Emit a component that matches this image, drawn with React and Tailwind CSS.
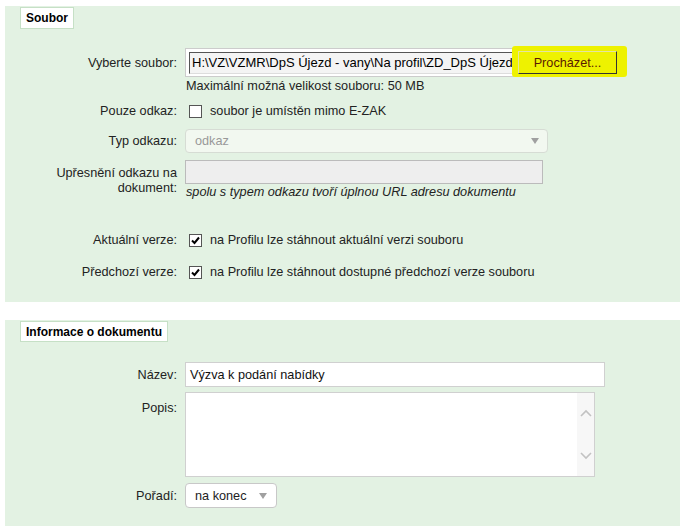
import React from "react";

const font = { fontFamily: '"Liberation Sans", Arial, sans-serif' };

const Check = ({ checked }) => (
  <span className="inline-flex h-[13px] w-[13px] shrink-0 items-center justify-center border border-[#555] bg-white">
    {checked && (
      <svg width="9" height="9" viewBox="0 0 9 9">
        <path d="M1 4.5 L3.5 7 L8 1.5" fill="none" stroke="#000" strokeWidth="2" />
      </svg>
    )}
  </span>
);

const Arrow = () => (
  <svg width="8" height="6" viewBox="0 0 8 6" className="shrink-0">
    <path d="M0 0 H8 L4 6 Z" fill="#a0a0a0" />
  </svg>
);

const Legend = ({ children }) => (
  <div className="ml-[15px] mt-[1px] inline-flex h-[22px] items-center border border-[#c6e0c6] bg-white px-[5px] text-[12px] font-bold text-black">
    {children}
  </div>
);

const Label = ({ children, className = "" }) => (
  <div className={`w-[180px] shrink-0 pr-[8px] text-right ${className}`}>{children}</div>
);

export default function App() {
  return (
    <div className="min-h-[526px] bg-white pt-[6px] text-[12.7px] leading-[16px] text-[#222]" style={font}>
      <div className="ml-[5px] flex h-[296px] flex-col bg-[#e3f2e3]">
        <div>
          <Legend>Soubor</Legend>
        </div>

        <div className="mt-[19px] flex items-center">
          <Label>Vyberte soubor:</Label>
          <div className="relative flex h-[29px] w-[435px] items-center border border-[#cccccc] bg-white pl-[3px]">
            <div className="flex h-[22px] w-[325px] items-center overflow-hidden whitespace-nowrap border border-t-[#555] border-l-[#555] border-b-[#ddd] border-r-[#ddd] bg-[#f4f4f4] pl-[2px] text-[13px] text-black">
              H:\VZ\VZMR\DpS Újezd - vany\Na profil\ZD_DpS Újezd
            </div>
            <div className="absolute left-[326px] top-[-3px] h-[31px] w-[115px] rounded-[3px] bg-[#eef200]" />
            <div className="relative ml-[4px] flex h-[23px] w-[99px] items-center justify-center border border-[#e4e4a0] border-b-[#333] border-r-[#333] bg-[#eef200] text-[#5a1a00]">
              Procházet...
            </div>
          </div>
        </div>

        <div className="mt-[1px] pl-[181px]">Maximální možná velikost souboru: 50 MB</div>

        <div className="mt-[9px] flex items-center">
          <Label>Pouze odkaz:</Label>
          <div className="ml-[4px] flex items-center gap-[8px]">
            <Check />
            <span>soubor je umístěn mimo E-ZAK</span>
          </div>
        </div>

        <div className="mt-[10px] flex items-center">
          <Label>Typ odkazu:</Label>
          <div className="flex h-[24px] w-[363px] items-center justify-between rounded-[4px] border border-[#d6dcd4] bg-[#f2f8f0] pl-[9px] pr-[8px] text-[#999]">
            <span>odkaz</span>
            <Arrow />
          </div>
        </div>

        <div className="mt-[7px] flex items-start">
          <Label className="pt-[6px] leading-[15px]">
            Upřesnění odkazu na
            <br />
            dokument:
          </Label>
          <div className="flex flex-col">
            <div className="h-[24px] w-[358px] border border-[#bbbbbb] bg-[#eeeeee]" />
            <div className="pl-[1px] italic">spolu s typem odkazu tvoří úplnou URL adresu dokumentu</div>
          </div>
        </div>

        <div className="mt-[32px] flex items-center">
          <Label>Aktuální verze:</Label>
          <div className="ml-[4px] flex items-center gap-[8px]">
            <Check checked />
            <span>na Profilu lze stáhnout aktuální verzi souboru</span>
          </div>
        </div>

        <div className="mt-[16px] flex items-center">
          <Label>Předchozí verze:</Label>
          <div className="ml-[4px] flex items-center gap-[8px]">
            <Check checked />
            <span>na Profilu lze stáhnout dostupné předchozí verze souboru</span>
          </div>
        </div>
      </div>

      <div className="ml-[5px] mt-[18px] flex min-h-[206px] flex-col bg-[#e3f2e3] pb-[18px]">
        <div>
          <div className="ml-[15px] mt-[1px] inline-flex h-[21px] items-center border border-[#c6e0c6] bg-white px-[5px] text-[12px] font-bold text-black">
            Informace o dokumentu
          </div>
        </div>

        <div className="mt-[20px] flex items-center">
          <Label>Název:</Label>
          <div className="flex h-[25px] w-[420px] items-center border border-[#d0d0d0] bg-white pl-[4px] text-[#111]">
            Výzva k podání nabídky
          </div>
        </div>

        <div className="mt-[5px] flex items-start">
          <Label className="pt-[8px]">Popis:</Label>
          <div className="flex h-[85px] w-[410px] justify-end border border-[#d0d0d0] bg-white">
            <div className="flex w-[17px] flex-col items-center justify-between bg-[#f7f7f7] py-[16px]">
              <svg width="12" height="8" viewBox="0 0 12 8">
                <path d="M1 7 L6 2 L11 7" fill="none" stroke="#c2c2c2" strokeWidth="1.6" />
              </svg>
              <svg width="12" height="8" viewBox="0 0 12 8">
                <path d="M1 1 L6 6 L11 1" fill="none" stroke="#c2c2c2" strokeWidth="1.6" />
              </svg>
            </div>
          </div>
        </div>

        <div className="mt-[6px] flex items-center">
          <Label>Pořadí:</Label>
          <div className="flex h-[25px] w-[92px] items-center justify-between rounded-[4px] border border-[#c8c8c8] bg-white pl-[9px] pr-[9px]">
            <span>na konec</span>
            <Arrow />
          </div>
        </div>
      </div>
    </div>
  );
}
